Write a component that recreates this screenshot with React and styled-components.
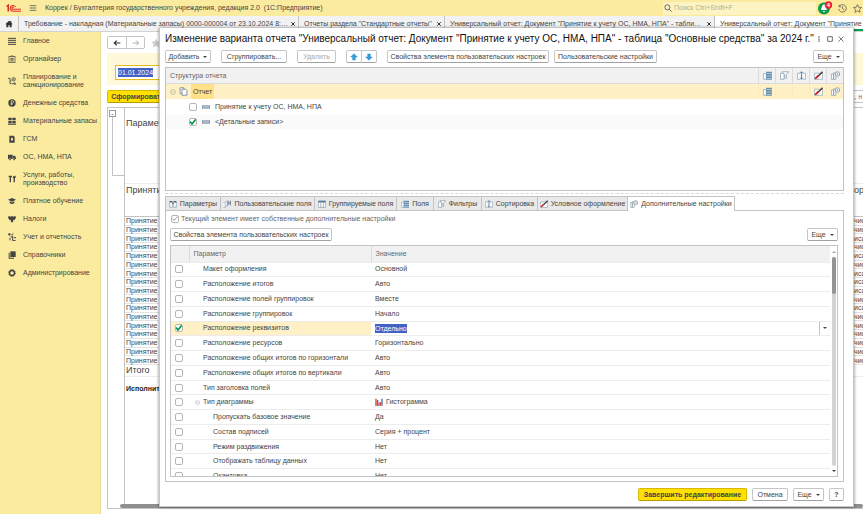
import React, { useState } from 'react'
import styled, { createGlobalStyle } from 'styled-components'

const colors = {
    brand: '#fbeb9e',
    row: '#fff1c5',
    line: '#c3c3c3',
    softLine: '#ececec',
    head: '#f1f1f1',
    text: '#454545',
    select: '#4360c4',
    green: '#0a9b4c',
}

const GlobalStyle = createGlobalStyle`
    * {
        box-sizing: border-box;
    }
    body {
        margin: 0;
        overflow: hidden;
        background: white;
        color: ${colors.text};
        font-family: "Liberation Sans", Arial, sans-serif;
        font-size: 7px;
        line-height: 8px;
    }
    button, input {
        font: inherit;
        color: inherit;
    }
    svg {
        display: block;
        flex: none;
    }
`

const Page = styled.div`
    position: relative;
    display: flex;
    flex-direction: column;
    height: 100vh;
`

const TopBar = styled.header`
    display: flex;
    align-items: center;
    gap: 8px;
    height: 16px;
    flex: none;
    padding-left: 6px;
    overflow: hidden;
    background: ${colors.brand};
`

const AppName = styled.span`
    flex: 1;
    white-space: pre;
`

const SearchBox = styled.label`
    display: flex;
    align-items: center;
    gap: 2px;
    width: 153px;
    height: 13px;
    flex: none;
    padding-left: 1px;
    background: #fdf3c3;

    input {
        flex: 1;
        min-width: 0;
        padding: 0;
        border: 0;
        background: none;
        outline: none;
    }
    input::placeholder {
        color: #b9b08a;
    }
`

const TopIcons = styled.div`
    display: flex;
    align-items: center;
    gap: 6px;
    width: 45px;
    flex: none;
    margin-left: -6px;
`

const WindowTabs = styled.nav`
    display: flex;
    height: 16px;
    flex: none;
    overflow: hidden;
    background: #f2f2f2;
    border-bottom: 1px solid #d2d2d2;
`

const HomeTab = styled.a`
    display: flex;
    align-items: center;
    justify-content: center;
    width: 19px;
    flex: none;
    border-right: 1px solid ${colors.line};
`

const WindowTab = styled.a`
    display: flex;
    align-items: center;
    justify-content: space-between;
    gap: 1px;
    width: ${props => props.$width};
    flex: none;
    padding: 0 2px 0 5px;
    color: ${colors.text};
    text-decoration: none;
    background: ${props => props.$active ? 'white' : 'none'};
    border-right: 1px solid ${colors.line};
    box-shadow: ${props => props.$active ? `inset 0 -2px ${colors.green}` : 'none'};
`

const WindowTitle = styled.span`
    overflow: hidden;
    white-space: nowrap;
    text-overflow: ellipsis;
`

const Body = styled.div`
    display: flex;
    flex: 1;
    min-height: 0;
`

const Sidebar = styled.nav`
    display: flex;
    flex-direction: column;
    width: 101px;
    flex: none;
    background: ${colors.brand};
    border-right: 1px solid #e9dc9a;
`

const SideItem = styled.a`
    display: flex;
    align-items: center;
    gap: 7px;
    padding: 5px 2px 5px 8px;
    color: #444444;
    text-decoration: none;
    white-space: pre-line;
`

const Workspace = styled.main`
    display: flex;
    flex-direction: column;
    flex: 1;
    min-width: 0;
    padding: 4px 0 5px 6px;
`

const NavRow = styled.div`
    display: flex;
    align-items: center;
    gap: 6px;
    height: 13px;
`

const NavButtons = styled.div`
    display: flex;
    border: 1px solid ${colors.line};
    border-radius: 2px;
`

const NavButton = styled.button`
    display: flex;
    align-items: center;
    justify-content: center;
    width: 18px;
    height: 11px;
    padding: 0;
    border: 0;
    background: white;

    & + & {
        border-left: 1px solid ${colors.line};
    }
`

const Period = styled.div`
    margin-top: 4px;
    padding: 12px 8px 5px;
    background: #fff9da;
`

const DateField = styled.label`
    display: flex;
    width: 100px;
    height: 15px;
    padding: 2px;
    border: 1px solid #e6bb1c;
    background: white;
`

const Selected = styled.input`
    field-sizing: content;
    height: 9px;
    padding: 0;
    border: 0;
    outline: none;
    background: ${colors.select};
    color: white;
`

const ReportBar = styled.div`
    display: flex;
    justify-content: space-between;
    height: 13px;
    margin: 5px 0 4px;
`

const ReportSearch = styled.input`
    width: 60px;
    padding: 0 1px;
    text-align: right;
    border: 1px solid ${colors.line};
    border-right: 0;
    background: white;
`

const Report = styled.section`
    display: flex;
    flex-direction: column;
    flex: 1;
    min-height: 0;
    border: 1px solid ${colors.line};
    border-right: 0;
`

const Sheet = styled.div`
    display: flex;
    flex: 1;
    min-height: 0;
`

const GroupRail = styled.div`
    width: 17px;
    flex: none;
    padding: 2px 0 0 1px;
    border-right: 1px solid ${colors.line};
`

const GroupToggle = styled.button`
    display: block;
    width: 7px;
    height: 7px;
    padding: 0;
    line-height: 4px;
    border: 1px solid #999999;
    background: white;
`

const GroupBracket = styled.div`
    height: 59px;
    margin-left: 3px;
    border-left: 1px solid ${colors.line};
    border-bottom: 1px solid ${colors.line};
`

const SheetCells = styled.div`
    display: flex;
    flex-direction: column;
    flex: 1;
    min-width: 0;
`

const SheetBlock = styled.div`
    display: flex;
    justify-content: space-between;
    align-items: flex-start;
    height: ${props => props.$height};
    flex: none;
    padding: ${props => props.$top || '0'} 0 0 1px;
    font-size: 9px;
    line-height: 10px;
    border-bottom: 1px solid ${props => props.$strong ? colors.line : colors.softLine};
`

const SheetRows = styled.div`
    display: flex;
    flex-direction: column;
    height: 148px;
    flex: none;
    line-height: 7px;
`

const SheetRow = styled.div`
    display: flex;
    justify-content: space-between;
    align-items: center;
    flex: 1;
    padding-left: 1px;
    border-bottom: 1px solid #e3e3e3;
`

const EdgeCell = styled.span`
    width: 9px;
    overflow: hidden;
    white-space: nowrap;
`

const Performer = styled.b`
    padding: 8px 1px;
    color: #222222;
`

const SheetScroll = styled.div`
    height: 4px;
    flex: none;
    margin-left: 12px;
    background: #8f8f8f;
    border-radius: 2px;
`

/////// Dialog

const Dialog = styled.section`
    position: absolute;
    inset: 28px 9px 7px 159px;
    display: flex;
    flex-direction: column;
    padding: 0 9px 5px 5px;
    background: white;
    border: 1px solid #c8c8c8;
    border-top: 0;
    box-shadow: 0 0 3px rgba(0, 0, 0, 0.5);
`

const DialogHead = styled.div`
    display: flex;
    align-items: center;
    justify-content: space-between;
    height: 22px;
    flex: none;
`

const DialogTitle = styled.h1`
    margin: 0;
    font-size: 10px;
    line-height: 12px;
    font-weight: normal;
    color: #111111;
    white-space: nowrap;
`

const Row = styled.div`
    display: flex;
    align-items: center;
    gap: ${props => props.$gap || '5px'};
    height: 13px;
    flex: none;
`

const Spacer = styled.span`
    flex: 1;
`

const Button = styled.button`
    display: flex;
    align-items: center;
    justify-content: center;
    gap: 4px;
    width: ${props => props.$width};
    height: 13px;
    flex: none;
    padding: 0;
    white-space: nowrap;
    font-weight: ${props => props.$primary ? 'bold' : 'normal'};
    color: ${props => props.disabled ? '#a9a9a9' : '#444444'};
    background: ${props => props.$primary ? '#ffe000' : 'white'};
    border: 1px solid ${props => props.$primary ? '#d8b800' : '#c6c6c6'};
    border-bottom-color: ${props => props.$primary ? '#b89c00' : '#a2a2a2'};
    border-radius: 2px;
`

const Caret = styled.i`
    border: 2px solid transparent;
    border-top-color: #444444;
    border-bottom: 0;
`

const MoveButtons = styled.div`
    display: flex;

    button:first-child {
        border-radius: 2px 0 0 2px;
    }
    button:last-child {
        border-left: 0;
        border-radius: 0 2px 2px 0;
    }
`

const Tree = styled.div`
    height: 124px;
    flex: none;
    margin-top: 4px;
    border: 1px solid ${colors.line};
`

const TreeRow = styled.div`
    display: flex;
    align-items: center;
    height: ${props => props.$head ? '16px' : '15px'};
    padding-left: ${props => props.$indent || '4px'};
    color: ${props => props.$head ? '#666666' : colors.text};
    background: ${props => props.$head ? colors.head : props.$active ? colors.row : props.$striped ? '#fafafa' : 'white'};
    border-bottom: ${props => props.$head ? '1px solid #dcdcdc' : '0'};
`

const TreeName = styled.span`
    display: flex;
    align-items: center;
    align-self: stretch;
    margin-left: 3px;
    padding: 0 2px;
    background: #ffe189;
`

const TreeLabel = styled.label`
    display: flex;
    align-items: center;
    gap: 5px;
`

const TreeIcons = styled.div`
    display: flex;
    align-self: stretch;
    margin-left: auto;
`

const TreeIcon = styled.span`
    display: flex;
    align-items: center;
    justify-content: center;
    width: 17px;
    border-left: 1px solid ${props => props.$head ? '#dcdcdc' : '#faecbd'};
`

const Splitter = styled.div`
    height: 3px;
    flex: none;
    margin-bottom: 2px;
    border-bottom: 1px dashed #d8d8d8;
`

const TabList = styled.div`
    display: flex;
    height: 14px;
    flex: none;
`

const Tab = styled.button`
    display: flex;
    align-items: center;
    justify-content: center;
    gap: 3px;
    width: ${props => props.$width};
    height: ${props => props.$active ? '15px' : '14px'};
    flex: none;
    padding: 0;
    white-space: nowrap;
    z-index: 1;
    background: ${props => props.$active ? 'white' : '#e9e9e9'};
    border: 1px solid ${colors.line};
    border-left-width: ${props => props.$first ? '1px' : '0'};
    border-bottom-width: 0;
`

const TabPanel = styled.div`
    display: flex;
    flex-direction: column;
    flex: 1;
    min-height: 0;
    padding: 2px 5px 4px 4px;
    border: 1px solid ${colors.line};
`

const OwnSettings = styled.label`
    display: flex;
    align-items: center;
    gap: 2px;
    height: 12px;
    flex: none;
    margin-bottom: 3px;
    padding-left: 1px;
    color: #666666;
`

const Check = styled.input.attrs({ type: 'checkbox' })`
    appearance: none;
    display: block;
    width: 8px;
    height: 8px;
    flex: none;
    margin: 0;
    border: 1px solid #b5b5b5;
    border-radius: 2px;
    background: white;

    &:checked {
        background: white url("data:image/svg+xml,%3Csvg xmlns='http://www.w3.org/2000/svg' viewBox='0 0 8 8'%3E%3Cpath d='M1 3.5 3 6 7 1' fill='none' stroke='%23009646' stroke-width='1.6'/%3E%3C/svg%3E") center / 8px 8px no-repeat;
        background-origin: border-box;
        background-clip: border-box;
    }
    &:disabled:checked {
        background-image: url("data:image/svg+xml,%3Csvg xmlns='http://www.w3.org/2000/svg' viewBox='0 0 8 8'%3E%3Cpath d='M1.5 3.5 3 5.5 6.5 1.5' fill='none' stroke='%23999999'/%3E%3C/svg%3E");
    }
`

const TableBox = styled.div`
    display: flex;
    flex: 1;
    min-height: 0;
    margin-top: 4px;
    overflow: hidden;
    border: 1px solid ${colors.line};
`

const Table = styled.table`
    flex: 1;
    height: 238px;
    table-layout: fixed;
    border-collapse: collapse;

    th, td {
        height: 14px;
        padding: 0 0 0 4px;
        text-align: left;
        font-weight: normal;
        border-bottom: 1px solid ${colors.softLine};
    }
    th {
        height: 16px;
        color: #666666;
        background: ${colors.head};
        border-right: 1px solid #dcdcdc;
    }
    th:last-child {
        border-right: 0;
    }
    tr > :first-child {
        width: 18px;
    }
    th:nth-child(2) {
        width: 182px;
    }
`

const ParamRow = styled.tr`
    td:first-child, td:nth-child(2) {
        background: ${props => props.$active ? colors.row : 'white'};
    }
    td:nth-child(2) {
        padding-left: ${props => props.$level === 2 ? '24px' : props.$level === 1 ? '6px' : '14px'};
    }
`

const CellLine = styled.div`
    display: flex;
    align-items: center;
    gap: 3px;
`

const ChooseButton = styled.button`
    display: flex;
    align-items: center;
    justify-content: center;
    width: 11px;
    height: 13px;
    margin-left: auto;
    padding: 0;
    background: white;
    border: 0;
    border-left: 1px solid ${colors.line};
`

const ScrollBar = styled.div`
    display: flex;
    flex-direction: column;
    align-items: center;
    gap: 4px;
    width: 7px;
    flex: none;
    padding: 5px 0 4px;
`

const ScrollTrack = styled.div`
    width: 4px;
    flex: 1;
    background: #d3d3d3;
    border-radius: 2px;
`

const ScrollThumb = styled.div`
    height: 37px;
    background: #949494;
    border-radius: 2px;
`

const ScrollArrow = styled.i`
    border: 2px solid transparent;
    ${props => props.$up ? 'border-bottom-color: #aaaaaa; border-top: 0;' : 'border-top-color: #444444; border-bottom: 0;'}
`

const Footer = styled.div`
    display: flex;
    justify-content: flex-end;
    gap: 5px;
    flex: none;
    padding-top: 6px;
`

const shapes = {
    menu: <path d="M1 2.5h10M1 6h10M1 9.5h10" stroke="#555" strokeWidth="1.2" />,
    home: <path d="M6 1 .5 6.3H2V11h3V8h2v3h3V6.3h1.5L9.5 4.3V1.5H8v1.3z" fill="#333" />,
    close: <path d="M2.5 2.5l7 7M9.5 2.5l-7 7" stroke="#333" strokeWidth="2" />,
    closeThin: <path d="M1 1l10 10M11 1 1 11" stroke="#444" strokeWidth="1.4" />,
    square: <rect x="1.5" y="1.5" width="9" height="9" fill="none" stroke="#444" strokeWidth="1.5" />,
    dots: <path d="M6 .5v2.5M6 4.8v2.5M6 9v2.5" stroke="#444" strokeWidth="2.4" />,
    star: <path d="M6 .8l1.6 3.5 3.8.4-2.8 2.5.8 3.9L6 9.1l-3.4 2 .8-3.9L.6 4.7l3.8-.4z" fill="none" stroke="#555" />,
    starFull: <path d="M6 .5l1.6 3.8 4 .4-3 2.6.9 4L6 9.2l-3.5 2.1.9-4-3-2.6 4-.4z" fill="#c9c9c9" />,
    search: <g fill="none" stroke="#555" strokeWidth="1.3"><circle cx="5" cy="5" r="3.8" /><path d="M8 8l3.5 3.5" /></g>,
    history: <g fill="none" stroke="#555"><path d="M1.5 3.5A5 5 0 1 1 1 6.5M1.5 1v2.8h2.8" /><path d="M6 3v3.3l2.5 1.5" /></g>,
    back: <path d="M11 6H2M5.5 2.5 2 6l3.5 3.5" fill="none" stroke="#333" strokeWidth="1.8" />,
    forward: <path d="M1 6h9M6.5 2.5 10 6 6.5 9.5" fill="none" stroke="#999" strokeWidth="1.2" />,
    up: <path d="M6 1l5 5H8v4.5H4V6H1z" fill="#2f9fe0" stroke="#1d78b5" strokeWidth=".6" />,
    down: <path d="M6 11 1 6h3V1.5h4V6h3z" fill="#2f9fe0" stroke="#1d78b5" strokeWidth=".6" />,
    lines: <path d="M0 2h12M0 5h12M0 8h12M0 11h12" stroke="#444" strokeWidth="1.5" />,
    clipboard: <g fill="none" stroke="#444"><rect x="1.5" y="2" width="9" height="9.5" /><path d="M4 1.5h4M3.5 5h5M3.5 7h5M3.5 9h5" strokeWidth="1.2" /></g>,
    plan: <g fill="none" stroke="#444" strokeWidth="1.3"><path d="M0 2h3v8h2.5M3 6h2" /><circle cx="8.5" cy="3.5" r="2.5" /><path d="M6 10h5.5M9.5 8l2 2-2 2M8.5 2.5v2" /></g>,
    coin: <g><circle cx="6" cy="6" r="5.5" fill="#3f3f3f" /><path d="M5 9.5v-7h1.7a1.8 1.8 0 0 1 0 3.7H4M4 7.8h3" fill="none" stroke="#fbeb9e" /></g>,
    goods: <path d="M.5 1h5v4h-5zM6.5 1h5v4h-5zM.5 6h5v3.5h-5zM6.5 6h5v3.5h-5zM0 10h12v1.5H0z" fill="#444" />,
    fuel: <g><path d="M2 1h6l2 2v8.5H2z" fill="#444" /><path d="M6 3.5c2.5 3 2 5 0 5s-2.5-2 0-5z" fill="#fbeb9e" /></g>,
    truck: <g><path d="M0 2.5h7V9H0zM7.5 4H10l2 2.5V9H7.5z" fill="#444" /><circle cx="3" cy="9.5" r="1.6" fill="#444" stroke="#fbeb9e" strokeWidth=".6" /><circle cx="9.2" cy="9.5" r="1.6" fill="#444" stroke="#fbeb9e" strokeWidth=".6" /></g>,
    tools: <path d="M1 1h5v2.5H4.5V11h-2V3.5H1zM8 1l1 1.5L10 1h1.5v3L10.3 5v6h-2V5L7 4z" fill="#444" />,
    cap: <path d="M6 1.5 0 4.3l6 2.8 6-2.8zM2.5 6.5V9c1.5 2 5.5 2 7 0V6.5L6 8.2z" fill="#444" />,
    eagle: <path d="M6 1 4.5 2.5 1 1.5 0 4l2.5 4 2-1L4 9.5 6 11.5 8 9.5 7.5 7l2 1L12 4l-1-2.5-3.5 1z" fill="#444" />,
    account: <g fill="none" stroke="#444" strokeWidth="1.5"><path d="M0 2h4M2 0v4M5 3l3-2M4 5l3 2M7 4v7.5h4.5M9 7h3M3 7v4" /></g>,
    books: <g><path d="M3.5.5h8v8.5h-8z" fill="#444" /><path d="M2.5 2.5H1v9h8v-1.3H2.5z" fill="#444" /></g>,
    gear: <g fill="none" stroke="#3f3f3f"><circle cx="6" cy="6" r="3.7" strokeWidth="2" /><circle cx="6" cy="6" r="5" strokeWidth="1.5" strokeDasharray="2 1.93" /></g>,
    page: <path d="M1.5 1h5v2H9l1.5 1.5V11H4V9H1.5zM4 9V3h2.5" fill="white" stroke="#667788" />,
    collapse: <g fill="none" stroke="#999"><circle cx="6" cy="6" r="5" /><path d="M3 6h6" /></g>,
    field: <g><path d="M0 3.5h12v5H0z" fill="#8095a8" /><path d="M2 6h2M5 6h2M8 6h2" stroke="white" strokeWidth="1.5" /></g>,
    params: <g><path d="M1 3h4v8H1zM7 3h4v8H7z" fill="white" stroke="#8ba0b0" /><path d="M1 2.5h4M7 2.5h4M5 5h2" stroke="#3e5a70" strokeWidth="2" /></g>,
    userFields: <g><path d="M.5 4h3v7h-3M3.5 2h3v7h-3" fill="white" stroke="#8ba0b0" /><path d="M7.5 8V1M11 8V1M7.5 4.5h3.5" stroke="#55728a" strokeWidth="1.3" /></g>,
    grid: <g><path d="M.5 1.5h11v9.5H.5zM4.2 4v7M8 4v7" fill="white" stroke="#8295a5" /><path d="M.5 2.5h11" stroke="#4c7da3" strokeWidth="2.5" /></g>,
    fields: <g><path d="M.5 3.5h4V11h-4z" fill="white" stroke="#8ba0b0" /><path d="M4 1h8v2.2H4zM4 4h8v2.2H4zM4 7h8v2.2H4zM4 10h8v1.5H4z" fill="#6892b3" /></g>,
    filter: <g fill="white" stroke="#8599a8"><path d="M.5 3h5v8h-5z" /><path d="M3 1h8.5L8.3 5v5L6.3 8V5z" /></g>,
    sort: <g><path d="M4 3H.5v8H4M8 3h3.5v8H8" fill="white" stroke="#8ba0b0" /><path d="M6 1v10M4 3l2-2 2 2M4 9l2 2 2-2" fill="none" stroke="#4a7fae" strokeWidth="1.2" /></g>,
    design: <g><path d="M.5 3h11v8H.5z" fill="white" stroke="#8ba0b0" /><path d="M11.5 1 5.5 7" stroke="#333" strokeWidth="1.8" /><path d="M6 6 1.5 10.5" stroke="#d02020" strokeWidth="2.4" /></g>,
    extra: <g fill="white" stroke="#8b9ba8"><path d="M.5 4h3v7h-3zM3.5 2.5h3V11h-3z" /><circle cx="8.5" cy="4" r="3" strokeWidth="1.3" /><circle cx="8.5" cy="4" r=".8" /></g>,
    chart: <g><path d="M1.5 1v10.5M8 6v5" stroke="#e23c33" strokeWidth="2" /><path d="M4 3v8.5M10.5 1v10" stroke="#3b6fb5" strokeWidth="2" /><path d="M6 7v4.5" stroke="#e23c33" strokeWidth="1.5" /><path d="M0 11.5h12" stroke="#777" /></g>,
}

const Icon = ({name, size = 8}) => (
    <svg width={size} height={size} viewBox="0 0 12 12" aria-hidden="true">{shapes[name]}</svg>
)

const Logo = () => (
    <svg width="15" height="8" viewBox="0 0 30 16" fill="none" stroke="#dd2a22" strokeWidth="2.2">
        <path d="M1 5 4.5 2.5V15" strokeWidth="3" />
        <path d="M19 5.5A5.8 5.8 0 1 0 14 14.5H30M16 7A2.3 2.3 0 1 0 14 10.5H30" />
    </svg>
)

const Bell = () => (
    <svg width="14" height="14" viewBox="0 0 28 28">
        <circle cx="12" cy="15" r="12" fill="#0a9b4c" />
        <path d="M12 7c-4 0-4 5-6 11h12C16 12 16 7 12 7zM9.5 20h5l-2.5 3z" fill="white" />
        <circle cx="21" cy="8" r="7.5" fill="#e8262c" />
        <text x="21" y="12" fontSize="12" fontWeight="bold" textAnchor="middle" fill="white">4</text>
    </svg>
)

const sections = [
    ['lines', 'Главное'],
    ['clipboard', 'Органайзер'],
    ['plan', 'Планирование и\nсанкционирование'],
    ['coin', 'Денежные средства'],
    ['goods', 'Материальные запасы'],
    ['fuel', 'ГСМ'],
    ['truck', 'ОС, НМА, НПА'],
    ['tools', 'Услуги, работы,\nпроизводство'],
    ['cap', 'Платное обучение'],
    ['eagle', 'Налоги'],
    ['account', 'Учет и отчетность'],
    ['books', 'Справочники'],
    ['gear', 'Администрирование'],
]

const windows = [
    {title: 'Требование - накладная (Материальные запасы) 0000-000004 от 23.10.2024 8:5...', width: '280px'},
    {title: 'Отчеты раздела "Стандартные отчеты"', width: '146px'},
    {title: 'Универсальный отчет: Документ "Принятие к учету ОС, НМА, НПА" - таблица "О...', width: '270px'},
    {title: 'Универсальный отчет: Документ "Принятие к учету ОС, НМА, НПА"', width: '270px', active: true},
]

const tabs = [
    ['params', 'Параметры', '56px'],
    ['userFields', 'Пользовательские поля', '94px'],
    ['grid', 'Группируемые поля', '82px'],
    ['fields', 'Поля', '37px'],
    ['filter', 'Фильтры', '48px'],
    ['sort', 'Сортировка', '56px'],
    ['design', 'Условное оформление', '90px'],
    ['extra', 'Дополнительные настройки', '107px'],
]

const params = [
    {name: 'Макет оформления', value: 'Основной'},
    {name: 'Расположение итогов', value: 'Авто'},
    {name: 'Расположение полей группировок', value: 'Вместе'},
    {name: 'Расположение группировок', value: 'Начало'},
    {name: 'Расположение реквизитов', value: 'Отдельно', active: true},
    {name: 'Расположение ресурсов', value: 'Горизонтально'},
    {name: 'Расположение общих итогов по горизонтали', value: 'Авто'},
    {name: 'Расположение общих итогов по вертикали', value: 'Авто'},
    {name: 'Тип заголовка полей', value: 'Авто'},
    {name: 'Тип диаграммы', value: 'Гистограмма', level: 1, icon: 'chart'},
    {name: 'Пропускать базовое значение', value: 'Да', level: 2},
    {name: 'Состав подписей', value: 'Серия + процент', level: 2},
    {name: 'Режим раздвижения', value: 'Нет', level: 2},
    {name: 'Отображать таблицу данных', value: 'Нет', level: 2},
    {name: 'Окантовка', value: 'Нет', level: 2},
]

const treeIcons = ['fields', 'filter', 'sort', 'design', 'extra']

// endings of the last report column
const edges = ['чис', 'чис', 'иса', 'чис', 'иса', 'чис', 'иса', 'иса', 'иса', 'чис', 'иса', 'чис', 'чис', 'чис', 'чис', 'чис', 'чис']

const ReportPage = () => (
    <Workspace>
        <NavRow>
            <NavButtons>
                <NavButton aria-label="Назад"><Icon name="back"/></NavButton>
                <NavButton aria-label="Вперед"><Icon name="forward"/></NavButton>
            </NavButtons>
            <Icon name="starFull" size={10}/>
        </NavRow>
        <Period>
            <DateField><Selected aria-label="Начало периода" defaultValue="01.01.2024"/></DateField>
        </Period>
        <ReportBar>
            <Button $primary $width="62px">Сформировать</Button>
            <ReportSearch aria-label="Поиск в отчете" placeholder="а, н"/>
        </ReportBar>
        <Report>
            <Sheet>
                <GroupRail>
                    <GroupToggle aria-label="Свернуть группу">-</GroupToggle>
                    <GroupBracket/>
                </GroupRail>
                <SheetCells>
                    <SheetBlock $height="76px" $top="10px">Параметры:</SheetBlock>
                    <SheetBlock $height="33px" $top="1px" $strong>
                        <span>Принятие к учету</span>
                        <EdgeCell>оря</EdgeCell>
                    </SheetBlock>
                    <SheetRows>
                        {edges.map((edge, index) => (
                            <SheetRow key={index}>
                                <span>Принятие к учету</span>
                                <EdgeCell>{edge}</EdgeCell>
                            </SheetRow>
                        ))}
                    </SheetRows>
                    <SheetBlock $height="12px">Итого</SheetBlock>
                    <Performer>Исполнитель</Performer>
                </SheetCells>
            </Sheet>
            <SheetScroll/>
        </Report>
    </Workspace>
)

const StructureTree = () => (
    <Tree>
        <TreeRow $head>
            <span>Структура отчета</span>
            <TreeIcons>
                {treeIcons.map(name => <TreeIcon key={name} $head><Icon name={name} size={9}/></TreeIcon>)}
            </TreeIcons>
        </TreeRow>
        <TreeRow $active>
            <Row $gap="3px">
                <Icon name="collapse" size={6}/>
                <Icon name="page" size={9}/>
            </Row>
            <TreeName>Отчет</TreeName>
            <TreeIcons>
                {treeIcons.map(name => (
                    <TreeIcon key={name}>
                        {name !== 'filter' && name !== 'sort' && <Icon name={name} size={9}/>}
                    </TreeIcon>
                ))}
            </TreeIcons>
        </TreeRow>
        <TreeRow $indent="23px">
            <TreeLabel><Check/><Icon name="field"/>Принятие к учету ОС, НМА, НПА</TreeLabel>
        </TreeRow>
        <TreeRow $indent="23px" $striped>
            <TreeLabel><Check defaultChecked/><Icon name="field"/>{'<Детальные записи>'}</TreeLabel>
        </TreeRow>
    </Tree>
)

const ParamTable = () => (
    <TableBox>
        <Table>
            <thead>
                <tr>
                    <th aria-label="Использование"></th>
                    <th>Параметр</th>
                    <th>Значение</th>
                </tr>
            </thead>
            <tbody>
                {params.map(({name, value, level, icon, active}) => (
                    <ParamRow key={name} $level={level} $active={active}>
                        <td><Check aria-label={name} defaultChecked={active}/></td>
                        <td>
                            <CellLine>
                                {level === 1 && <Icon name="collapse" size={5}/>}
                                {name}
                            </CellLine>
                        </td>
                        <td>
                            <CellLine>
                                {icon && <Icon name={icon}/>}
                                {active ? <Selected aria-label={name} defaultValue={value}/> : value}
                                {active && <ChooseButton aria-label="Выбрать"><Caret/></ChooseButton>}
                            </CellLine>
                        </td>
                    </ParamRow>
                ))}
            </tbody>
        </Table>
        <ScrollBar>
            <ScrollArrow $up/>
            <ScrollTrack><ScrollThumb/></ScrollTrack>
            <ScrollArrow/>
        </ScrollBar>
    </TableBox>
)

const VariantDialog = () => {
    const [tab, setTab] = useState('extra')

    return (
        <Dialog role="dialog" aria-labelledby="variant-title">
            <DialogHead>
                <DialogTitle id="variant-title">Изменение варианта отчета "Универсальный отчет: Документ "Принятие к учету ОС, НМА, НПА" - таблица "Основные средства" за 2024 г."</DialogTitle>
                <Row>
                    <Icon name="dots" size={6}/>
                    <Icon name="square" size={6}/>
                    <Icon name="closeThin" size={6}/>
                </Row>
            </DialogHead>
            <Row $gap="10px">
                <Button $width="46px">Добавить <Caret/></Button>
                <Button $width="66px">Сгруппировать...</Button>
                <Button $width="39px" disabled>Удалить</Button>
                <MoveButtons>
                    <Button $width="16px" aria-label="Вверх"><Icon name="up"/></Button>
                    <Button $width="15px" aria-label="Вниз"><Icon name="down"/></Button>
                </MoveButtons>
                <Row>
                    <Button $width="162px">Свойства элемента пользовательских настроек</Button>
                    <Button $width="103px">Пользовательские настройки</Button>
                </Row>
                <Spacer/>
                <Button $width="31px">Еще <Caret/></Button>
            </Row>
            <StructureTree/>
            <Splitter/>
            <TabList role="tablist">
                {tabs.map(([id, title, width], index) => (
                    <Tab key={id} role="tab" aria-selected={tab === id} $active={tab === id} $first={index === 0} $width={width} onClick={() => setTab(id)}>
                        <Icon name={id}/>{title}
                    </Tab>
                ))}
            </TabList>
            <TabPanel>
                <OwnSettings><Check defaultChecked disabled/>Текущий элемент имеет собственные дополнительные настройки</OwnSettings>
                <Row>
                    <Button $width="162px">Свойства элемента пользовательских настроек</Button>
                    <Spacer/>
                    <Button $width="31px">Еще <Caret/></Button>
                </Row>
                <ParamTable/>
            </TabPanel>
            <Footer>
                <Button $primary $width="109px">Завершить редактирование</Button>
                <Button $width="36px">Отмена</Button>
                <Button $width="31px">Еще <Caret/></Button>
                <Button $width="15px"><b>?</b></Button>
            </Footer>
        </Dialog>
    )
}

const App = () => {
    return (
        <Page>
            <GlobalStyle/>
            <TopBar>
                <Logo/>
                <Icon name="menu"/>
                <AppName>Коррек / Бухгалтерия государственного учреждения, редакция 2.0  (1С:Предприятие)</AppName>
                <SearchBox>
                    <Icon name="search"/>
                    <input aria-label="Поиск" placeholder="Поиск Ctrl+Shift+F"/>
                </SearchBox>
                <TopIcons>
                    <Bell/>
                    <Icon name="history" size={9}/>
                    <Icon name="star" size={9}/>
                </TopIcons>
            </TopBar>
            <WindowTabs>
                <HomeTab href="#" aria-label="Начальная страница"><Icon name="home"/></HomeTab>
                {windows.map(({title, width, active}) => (
                    <WindowTab key={title} href="#" $width={width} $active={active}>
                        <WindowTitle>{title}</WindowTitle>
                        <Icon name="close" size={6}/>
                    </WindowTab>
                ))}
            </WindowTabs>
            <Body>
                <Sidebar>
                    {sections.map(([icon, title]) => (
                        <SideItem key={title} href="#"><Icon name={icon}/>{title}</SideItem>
                    ))}
                </Sidebar>
                <ReportPage/>
            </Body>
            <VariantDialog/>
        </Page>
    )
}

export default App
